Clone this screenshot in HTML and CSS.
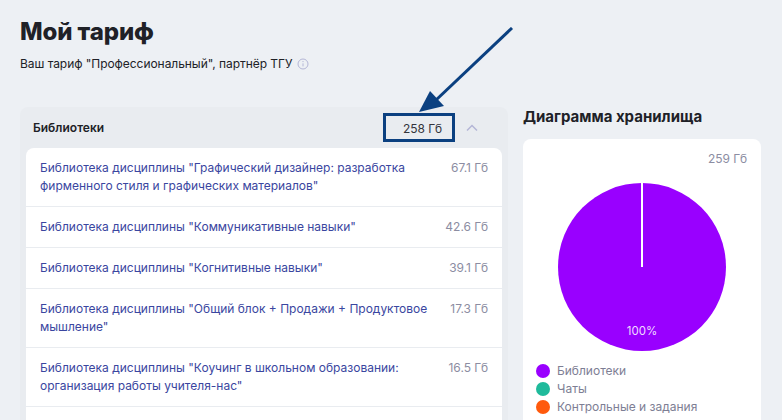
FILE: index.html
```html
<!DOCTYPE html>
<html>
<head>
  <meta charset="utf-8">
  <title>Мой тариф</title>
  <link rel="stylesheet" href="styles.css">
</head>
<body>
  <div class="page">
    <h1>Мой тариф</h1>
    <p class="plan">
      <span class="plan-text">Ваш тариф "Профессиональный", партнёр ТГУ</span>
      <svg class="info" width="12" height="12" viewBox="0 0 12 12" fill="none">
        <circle cx="6" cy="6" r="5" stroke="#b4b6d6"/>
        <path d="M6 5.4v3" stroke="#b4b6d6"/>
        <circle cx="6" cy="3.6" r=".7" fill="#b4b6d6"/>
      </svg>
    </p>

    <div class="columns">
      <div class="panel">
        <div class="panel-head">
          <span class="panel-title">Библиотеки</span>
          <span class="panel-size">258 Гб</span>
          <svg class="chevron" width="12" height="8" viewBox="0 0 12 8" fill="none">
            <path d="M1 6.5l5-5 5 5" stroke="#b4b6d6" stroke-width="1.5"/>
          </svg>
        </div>
        <div class="list">
          <div class="row"><a>Библиотека дисциплины "Графический дизайнер: разработка фирменного стиля и графических материалов"</a><span>67.1 Гб</span></div>
          <div class="row"><a>Библиотека дисциплины "Коммуникативные навыки"</a><span>42.6 Гб</span></div>
          <div class="row"><a>Библиотека дисциплины "Когнитивные навыки"</a><span>39.1 Гб</span></div>
          <div class="row"><a>Библиотека дисциплины "Общий блок + Продажи + Продуктовое мышление"</a><span>17.3 Гб</span></div>
          <div class="row"><a>Библиотека дисциплины "Коучинг в школьном образовании: организация работы учителя-нас"</a><span>16.5 Гб</span></div>
          <div class="row row-empty"></div>
        </div>
      </div>

      <div class="side">
        <h2>Диаграмма хранилища</h2>
        <div class="chart-card">
          <div class="total">259 Гб</div>
          <div class="pie">
            <span class="pie-line"></span>
            <span class="pie-label">100%</span>
          </div>
          <ul class="legend">
            <li><i class="dot purple"></i>Библиотеки</li>
            <li><i class="dot green"></i>Чаты</li>
            <li><i class="dot orange"></i>Контрольные и задания</li>
          </ul>
        </div>
      </div>
    </div>

    <!-- annotation drawn over the screenshot -->
    <div class="mark"></div>
    <svg class="arrow" width="100" height="90" viewBox="0 0 100 90" fill="none">
      <path d="M93 1L16 74" stroke="#0b4080" stroke-width="3"/>
      <path d="M0 85L11 64L25 79Z" fill="#0b4080"/>
    </svg>
  </div>
</body>
</html>
```

FILE: styles.css
```css
html, body { margin: 0; height: 420px; overflow: hidden; }
body { font-family: Inter, "Noto Sans", sans-serif; background: #edf0f4; color: #202127; }
.page { position: relative; height: 420px; overflow: hidden; padding: 0 21px 0 20px; }

h1 { margin: 0; padding-top: 16px; font-size: 24px; line-height: 32px; font-weight: 800; letter-spacing: -0.1px; }
.plan { margin: 8px 0 0; font-size: 12px; line-height: 16px; display: flex; align-items: center; gap: 5px; }
.plan-text { letter-spacing: -0.05px; }

.columns { display: flex; gap: 15px; margin-top: 35px; align-items: flex-start; }

.panel { width: 488px; flex: none; background: #e9ecf0; border-radius: 8px; padding: 0 6px; box-sizing: border-box; }
.panel-head { display: flex; align-items: center; height: 41px; padding: 0 24px 0 7px; font-size: 12px; }
.panel-title { font-weight: 600; flex: 1; }
.panel-size { margin-right: 24px; margin-top: 1px; color: #33343c; }
.chevron { display: block; }

.list { background: #fff; border-radius: 8px 8px 0 0; }
.row { display: flex; justify-content: space-between; gap: 18px; padding: 11px 14px 11px 14px; border-bottom: 1px solid #e9ecf0; font-size: 12px; line-height: 18px; }
.row a { color: #3a46a0; flex: 1; }
.row span { color: #8c8da2; white-space: nowrap; }
.row-empty { height: 40px; }

.side { width: 238px; flex: none; }
h2 { margin: 0; font-size: 15px; line-height: 20px; font-weight: 700; }
.chart-card { margin-top: 12px; background: #fff; border-radius: 8px; padding: 13px 14px 14px; height: 300px; box-sizing: border-box; }
.total { text-align: right; font-size: 12px; line-height: 14px; color: #8c8da2; }
.pie { position: relative; width: 168px; height: 168px; margin: 17px auto 0; border-radius: 50%; background: #9900ff; }
.pie-line { position: absolute; left: 83px; top: 0; width: 2px; height: 84px; background: #fff; }
.pie-label { position: absolute; left: 0; right: 0; bottom: 13px; text-align: center; font-size: 11.5px; line-height: 14px; color: #f0dcff; }

.legend { list-style: none; margin: 11px 0 0 -1px; padding: 0; font-size: 12px; line-height: 18px; color: #7d7e94; }
.legend li { display: flex; align-items: center; gap: 7px; }
.dot { width: 14px; height: 14px; border-radius: 50%; }
.purple { background: #9900ff; }
.green { background: #1fba9b; }
.orange { background: #ff5a0d; }

.mark { position: absolute; left: 383px; top: 113px; width: 72px; height: 29px; box-sizing: border-box; border: 3px solid #0b4080; }
.arrow { position: absolute; left: 419px; top: 27px; }
```
